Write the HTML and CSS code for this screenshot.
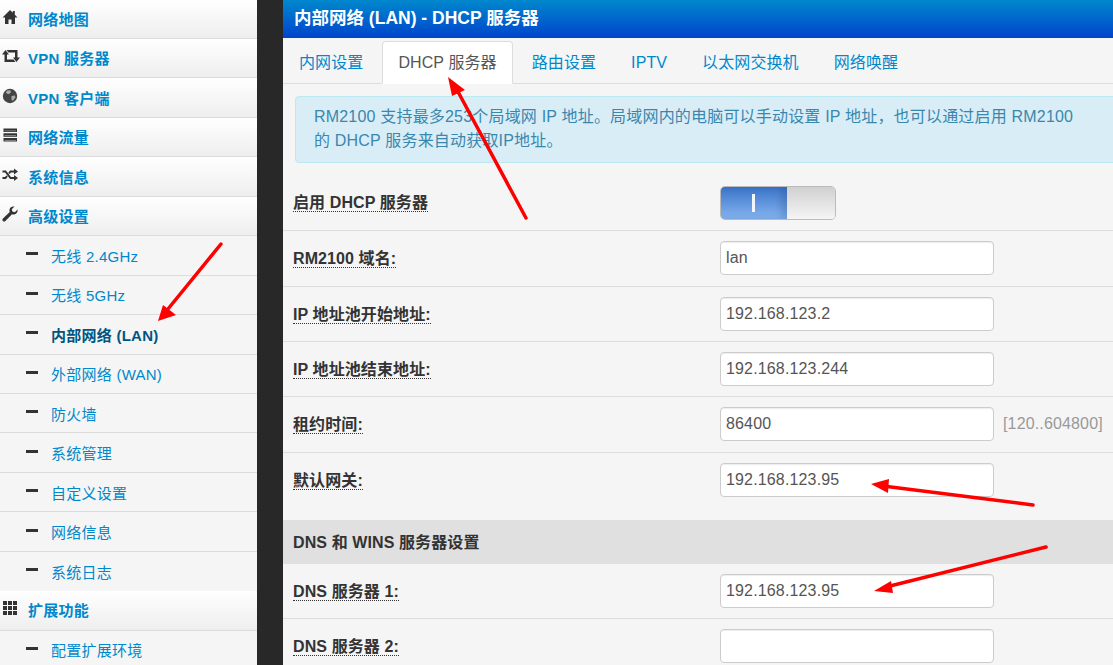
FILE: index.html
```html
<!DOCTYPE html>
<html>
<head>
    <meta charset="utf-8" />
    <title>内部网络 (LAN) - DHCP 服务器</title>
    <link rel="stylesheet" href="styles.css">
</head>
<body>
    <nav class="sidebar">
        <a class="nav-top" href="#">
            <svg class="nav-icon" viewBox="0 0 16 16"><path d="M8 1 0.5 8.5H3V15H6.5V10.5H9.5V15H13V8.5H15.5L12.8 5.8V2H10.8V3.8Z"/></svg>
            <span>网络地图</span>
        </a>
        <a class="nav-top" href="#">
            <svg class="nav-icon wide" viewBox="0 0 18 16"><path d="M0 6.5 3.5 2 7 6.5H5V11.5H11.5L13.5 14H2.5V6.5ZM18 9.5 14.5 14 11 9.5H13V4.5H6.5L4.5 2H15.5V9.5Z"/></svg>
            <span>VPN 服务器</span>
        </a>
        <a class="nav-top" href="#">
            <svg class="nav-icon" viewBox="0 0 16 16"><circle cx="8" cy="8" r="7.2" fill="#444"/><path fill="#aaa" d="M5 2.6 8.4 2.2 9 4.4 6.6 6.2 3.8 5ZM9.5 8 13 7.4 13.4 9.6 10.8 13 9.4 11.2Z"/></svg>
            <span>VPN 客户端</span>
        </a>
        <a class="nav-top" href="#">
            <svg class="nav-icon" viewBox="0 0 16 16"><path d="M1.5 1.5H15V5H1.5ZM1.5 6.2H15V9.7H1.5ZM1.5 11H15V14.5H1.5Z"/><path fill="#999" d="M2.5 3.5H14V4.2H2.5ZM2.5 8.2H14V8.9H2.5ZM2.5 13H14V13.7H2.5Z"/></svg>
            <span>网络流量</span>
        </a>
        <a class="nav-top" href="#">
            <svg class="nav-icon" viewBox="0 0 16 16"><path fill="none" stroke="#333" stroke-width="2" d="M0.5 4.5H3.5L8.5 11H12.5M0.5 11H3.5L5 9M7 6.5 8.5 4.5H12.5"/><path d="M12 1.5 16 4.5 12 7.5ZM12 8 16 11 12 14Z"/></svg>
            <span>系统信息</span>
        </a>
        <a class="nav-top" href="#">
            <svg class="nav-icon" viewBox="0 0 16 16"><path d="M15.5 3.6 12.8 6.2 10.4 5.6 9.8 3.2 12.5 0.6C10.3 0 8 1.2 7.5 3.5 7.3 4.3 7.4 5.1 7.7 5.9L1 12.4C0.2 13.2 0.2 14.2 0.9 14.9 1.6 15.6 2.7 15.6 3.4 14.9L10 8.3C10.8 8.6 11.6 8.7 12.4 8.5 14.8 8 16 5.8 15.5 3.6Z"/></svg>
            <span>高级设置</span>
        </a>
        <a class="nav-sub" href="#"><i class="dash"></i><span>无线 2.4GHz</span></a>
        <a class="nav-sub" href="#"><i class="dash"></i><span>无线 5GHz</span></a>
        <a class="nav-sub active" href="#"><i class="dash"></i><span>内部网络 (LAN)</span></a>
        <a class="nav-sub" href="#"><i class="dash"></i><span>外部网络 (WAN)</span></a>
        <a class="nav-sub" href="#"><i class="dash"></i><span>防火墙</span></a>
        <a class="nav-sub" href="#"><i class="dash"></i><span>系统管理</span></a>
        <a class="nav-sub" href="#"><i class="dash"></i><span>自定义设置</span></a>
        <a class="nav-sub" href="#"><i class="dash"></i><span>网络信息</span></a>
        <a class="nav-sub no-line" href="#"><i class="dash"></i><span>系统日志</span></a>
        <a class="nav-top" href="#">
            <svg class="nav-icon" viewBox="0 0 16 16"><path d="M1 1H5V5H1ZM6 1H10V5H6ZM11 1H15V5H11ZM1 6H5V10H1ZM6 6H10V10H6ZM11 6H15V10H11ZM1 11H5V15H1ZM6 11H10V15H6ZM11 11H15V15H11Z"/></svg>
            <span>扩展功能</span>
        </a>
        <a class="nav-sub" href="#"><i class="dash"></i><span>配置扩展环境</span></a>
    </nav>

    <main class="content">
        <h1 class="page-title">内部网络 (LAN) - DHCP 服务器</h1>
        <ul class="tabs">
            <li><a href="#">内网设置</a></li>
            <li class="selected"><a href="#">DHCP 服务器</a></li>
            <li><a href="#">路由设置</a></li>
            <li><a href="#">IPTV</a></li>
            <li><a href="#">以太网交换机</a></li>
            <li><a href="#">网络唤醒</a></li>
        </ul>
        <div class="notice">
            RM2100 支持最多253个局域网 IP 地址。局域网内的电脑可以手动设置 IP 地址，也可以通过启用 RM2100<br>
            的 DHCP 服务来自动获取IP地址。
        </div>
        <form class="settings">
            <div class="row">
                <label class="label toggle-label"><span>启用 DHCP 服务器</span></label>
                <div class="toggle"><span class="toggle-on"><i></i></span><span class="toggle-off"></span></div>
            </div>
            <div class="row">
                <label class="label"><span>RM2100 域名:</span></label>
                <input class="field" type="text" value="lan">
            </div>
            <div class="row">
                <label class="label"><span>IP 地址池开始地址:</span></label>
                <input class="field" type="text" value="192.168.123.2">
            </div>
            <div class="row">
                <label class="label"><span>IP 地址池结束地址:</span></label>
                <input class="field" type="text" value="192.168.123.244">
            </div>
            <div class="row">
                <label class="label"><span>租约时间:</span></label>
                <input class="field" type="text" value="86400">
                <span class="hint">[120..604800]</span>
            </div>
            <div class="row last">
                <label class="label"><span>默认网关:</span></label>
                <input class="field" type="text" value="192.168.123.95">
            </div>
            <h2 class="section">DNS 和 WINS 服务器设置</h2>
            <div class="row">
                <label class="label"><span>DNS 服务器 1:</span></label>
                <input class="field" type="text" value="192.168.123.95">
            </div>
            <div class="row">
                <label class="label"><span>DNS 服务器 2:</span></label>
                <input class="field" type="text" value="">
            </div>
        </form>
    </main>

    <!-- red arrows drawn on top of the screenshot -->
    <svg class="arrows" viewBox="0 0 1113 665">
        <g fill="none" stroke="#f00" stroke-width="3.5" stroke-linecap="round">
            <path d="M526 218 456 88"/>
            <path d="M221 244 168 309"/>
            <path d="M1033 505 883 486"/>
            <path d="M1046 547 886 587"/>
        </g>
        <g fill="#f00">
            <path d="M448 77 465 90 452 96Z"/>
            <path d="M158 321 176 315 163 305Z"/>
            <path d="M871 484 889 479 888 493Z"/>
            <path d="M874 591 891 581 893 593Z"/>
        </g>
    </svg>
</body>
</html>
```

FILE: styles.css
```css
* {
    box-sizing: border-box;
}

body {
    background-color: #282828;
    color: #333;
    font-family: "Liberation Sans", "Noto Sans CJK SC", sans-serif;
    font-size: 16px;
    margin: 0;
    width: 1113px;
    height: 665px;
    display: flex;
    position: relative;
    overflow: hidden;
}

a {
    text-decoration: none;
}

/* sidebar */
.sidebar {
    width: 257px;
    flex: none;
    margin-top: -0.4px;
    background-color: #f5f5f5;
    border-top-right-radius: 4px;
}

.nav-top,
.nav-sub {
    display: flex;
    align-items: center;
    height: 39.45px;
    color: #0088cc;
    font-size: 15px;
    letter-spacing: 0.25px;
    border-bottom: 1px solid #dcdcdc;
}

.nav-top {
    padding-left: 2px;
    padding-bottom: 1px;
    font-weight: bold;
    background: linear-gradient(#ffffff, #eeeeee);
}

.nav-icon {
    width: 16px;
    height: 16px;
    margin-right: 10px;
    margin-top: -3px;
    fill: #333;
    flex: none;
}

.nav-icon.wide {
    width: 18px;
    margin-right: 8px;
}

.nav-sub {
    padding-left: 26px;
}

.nav-sub.no-line {
    border-bottom: none;
}

.nav-sub.active {
    color: #005580;
    font-weight: bold;
}

.dash {
    width: 12px;
    height: 3px;
    margin-right: 13px;
    margin-top: -3px;
    background-color: #333;
    flex: none;
}

/* main column */
.content {
    width: 830px;
    margin-left: 26px;
    flex: none;
    background-color: #f5f5f5;
}

.page-title {
    margin: 0;
    height: 38px;
    padding: 0 0 5px 11px;
    display: flex;
    align-items: center;
    color: #fff;
    font-size: 17.5px;
    font-weight: bold;
    background: linear-gradient(#0088cc, #0044cc);
}

.tabs {
    list-style-type: none;
    margin: 0;
    padding: 3px 0 0 0;
    height: 46px;
    display: flex;
    border-bottom: 1px solid #dddddd;
}

.tabs li {
    margin-right: 3px;
}

.tabs a {
    display: block;
    height: 43px;
    padding: 0 15px;
    line-height: 41px;
    letter-spacing: 0.1px;
    color: #0088cc;
    border: 1px solid transparent;
}

.tabs .selected a {
    color: #555;
    background-color: #fff;
    border: 1px solid #dddddd;
    border-bottom-color: #fff;
    border-radius: 4px 4px 0 0;
}

.notice {
    width: 840px;
    margin: 12px 0 13px 12px;
    height: 67px;
    padding: 8px 18px;
    line-height: 24px;
    letter-spacing: 0.19px;
    color: #3a87ad;
    background-color: #d9edf7;
    border: 1px solid #bce8f1;
    border-radius: 4px;
}

.row {
    display: flex;
    align-items: center;
    height: 55.33px;
    border-bottom: 1px solid #dddddd;
}

.row.last {
    height: 67.5px;
    padding-bottom: 12.5px;
    border-bottom: none;
}

.label {
    width: 437px;
    padding-left: 10px;
    padding-bottom: 2px;
    font-weight: bold;
    letter-spacing: 0.1px;
    flex: none;
}

.label.toggle-label {
    padding-bottom: 5px;
}

.label span {
    border-bottom: 1px dotted #333;
}

.field {
    width: 274px;
    height: 34px;
    padding: 0 5px;
    color: #555;
    font-family: inherit;
    font-size: 16px;
    letter-spacing: 0.15px;
    background-color: #fff;
    border: 1px solid #cccccc;
    border-radius: 4px;
    box-shadow: inset 0 1px 1px rgba(0, 0, 0, 0.075);
}

.hint {
    margin-left: 9px;
    color: #999;
    font-size: 16px;
    letter-spacing: 0.15px;
}

.toggle {
    display: flex;
    width: 116px;
    height: 34px;
    border: 1px solid #bbbbbb;
    border-radius: 5px;
    overflow: hidden;
}

.toggle-on {
    width: 66px;
    display: flex;
    align-items: center;
    justify-content: center;
    padding-right: 1px;
    background: linear-gradient(#3b74c9, #85b4ef);
    box-shadow: inset -6px 0 6px rgba(20, 50, 110, 0.18);
}

.toggle-on i {
    width: 3px;
    height: 18px;
    background-color: #f2f6fd;
}

.toggle-off {
    flex: 1;
    background: linear-gradient(#d0d0d0, #f5f5f5);
}

.section {
    margin: 0;
    height: 43.5px;
    padding-left: 10px;
    padding-bottom: 2px;
    display: flex;
    align-items: center;
    font-size: 16px;
    letter-spacing: 0.1px;
    background-color: #e0e0e0;
}

.arrows {
    position: absolute;
    left: 0;
    top: 0;
    width: 1113px;
    height: 665px;
    pointer-events: none;
}
```
